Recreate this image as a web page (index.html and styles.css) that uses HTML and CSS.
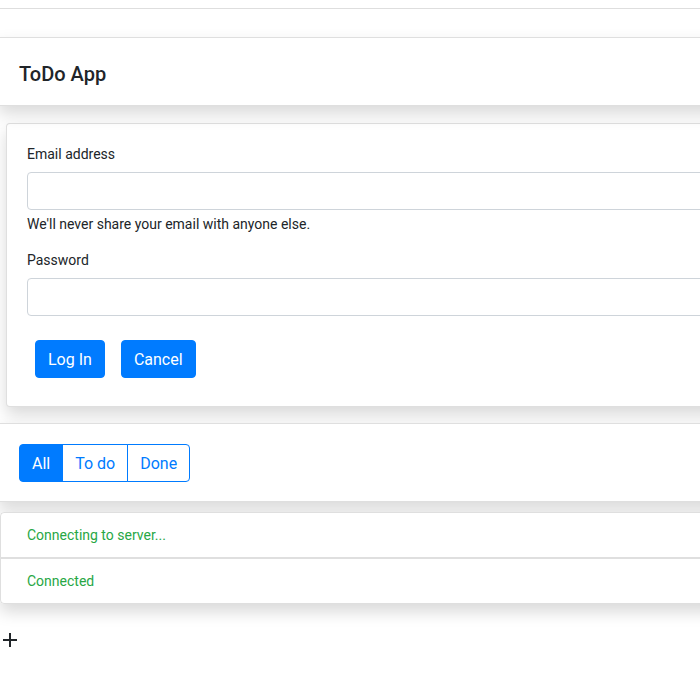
FILE: index.html
```html
<!DOCTYPE html>
<html lang="en">
<head>
<meta charset="utf-8">
<title>ToDo App</title>
<link rel="stylesheet" href="styles.css">
</head>
<body>
<div class="topbar"></div>
<header class="card header">
  <h1 class="title">ToDo App</h1>
</header>
<form class="card login">
  <div class="group first">
    <label class="label" for="email">Email address</label>
    <input class="input" id="email" type="email">
    <div class="help">We'll never share your email with anyone else.</div>
  </div>
  <div class="group">
    <label class="label" for="pw">Password</label>
    <input class="input" id="pw" type="password">
  </div>
  <div class="actions">
    <button type="button" class="btn">Log In</button>
    <button type="button" class="btn">Cancel</button>
  </div>
</form>
<section class="card filters">
  <div class="btn-group">
    <button type="button" class="seg active">All</button>
    <button type="button" class="seg">To do</button>
    <button type="button" class="seg">Done</button>
  </div>
</section>
<ul class="card list">
  <li class="row">Connecting to server...</li>
  <li class="row">Connected</li>
</ul>
<div class="add">
  <svg width="16" height="16" viewBox="0 0 16 16"><path d="M8 1v14M1 8h14" stroke="#212529" stroke-width="2" fill="none"/></svg>
</div>
</body>
</html>
```

FILE: styles.css
```css
html, body {
  margin: 0;
  padding: 0;
  overflow-x: hidden;
  background: #fff;
}
body {
  font-family: Roboto, "Liberation Sans", sans-serif;
  font-size: 16px;
  line-height: 1.5;
  color: #212529;
}
.topbar {
  margin: 8px -40px 0 -2px;
  height: 28px;
  border-top: 1px solid #dedede;
}
.card {
  background: #fff;
  border: 1px solid rgba(0,0,0,.125);
  box-shadow: 0 .5rem 1rem rgba(0,0,0,.15);
}
.header {
  position: relative;
  margin: 0 -40px 0 -2px;
  padding: 24px 20px 19px;
}
.title {
  margin: 0;
  font-size: 20px;
  line-height: 24px;
  font-weight: 500;
}
.login {
  margin: 17px -40px 0 6px;
  border-radius: 4px;
  padding: 20px;
}
.group { margin-bottom: 16px; }
.group.first { margin-bottom: 15px; }
.label {
  display: block;
  font-size: 14px;
  line-height: 21px;
  margin-bottom: 7px;
}
.input {
  display: block;
  box-sizing: border-box;
  width: 100%;
  height: 38px;
  border: 1px solid #ced4da;
  border-radius: 4px;
  font: inherit;
  padding: 6px 12px;
  margin: 0;
}
.help {
  margin-top: 4px;
  font-size: 14px;
  line-height: 21px;
}
.actions { display: flex; }
.btn {
  margin: 8px;
  height: 38px;
  padding: 7px 12px 5px;
  border: 1px solid #007bff;
  background: #007bff;
  color: #fff;
  font: inherit;
  border-radius: 4px;
}
.filters {
  margin: 16px -40px 0 -2px;
  padding: 20px 20px 19px;
}
.btn-group { display: inline-flex; }
.seg {
  height: 38px;
  padding: 7px 12px 5px;
  border: 1px solid #007bff;
  background: #fff;
  color: #007bff;
  font: inherit;
  margin: 0 0 0 -1px;
}
.seg:first-child { margin-left: 0; border-radius: 4px 0 0 4px; }
.seg:last-child { border-radius: 0 4px 4px 0; }
.seg.active { background: #007bff; color: #fff; }
.list {
  margin: 10px -40px 0 0;
  padding: 0;
  list-style: none;
  border: none;
  border-radius: 4px;
}
.row {
  padding: 12px 26px 11px;
  font-size: 14px;
  line-height: 21px;
  color: #28a745;
  border: 1px solid rgba(0,0,0,.125);
}
.row:first-child { border-radius: 4px 4px 0 0; }
.row:last-child { border-radius: 0 0 4px 4px; }
.add {
  margin-top: 28px;
  padding-left: 2px;
  height: 16px;
}
.add svg { display: block; }
```
